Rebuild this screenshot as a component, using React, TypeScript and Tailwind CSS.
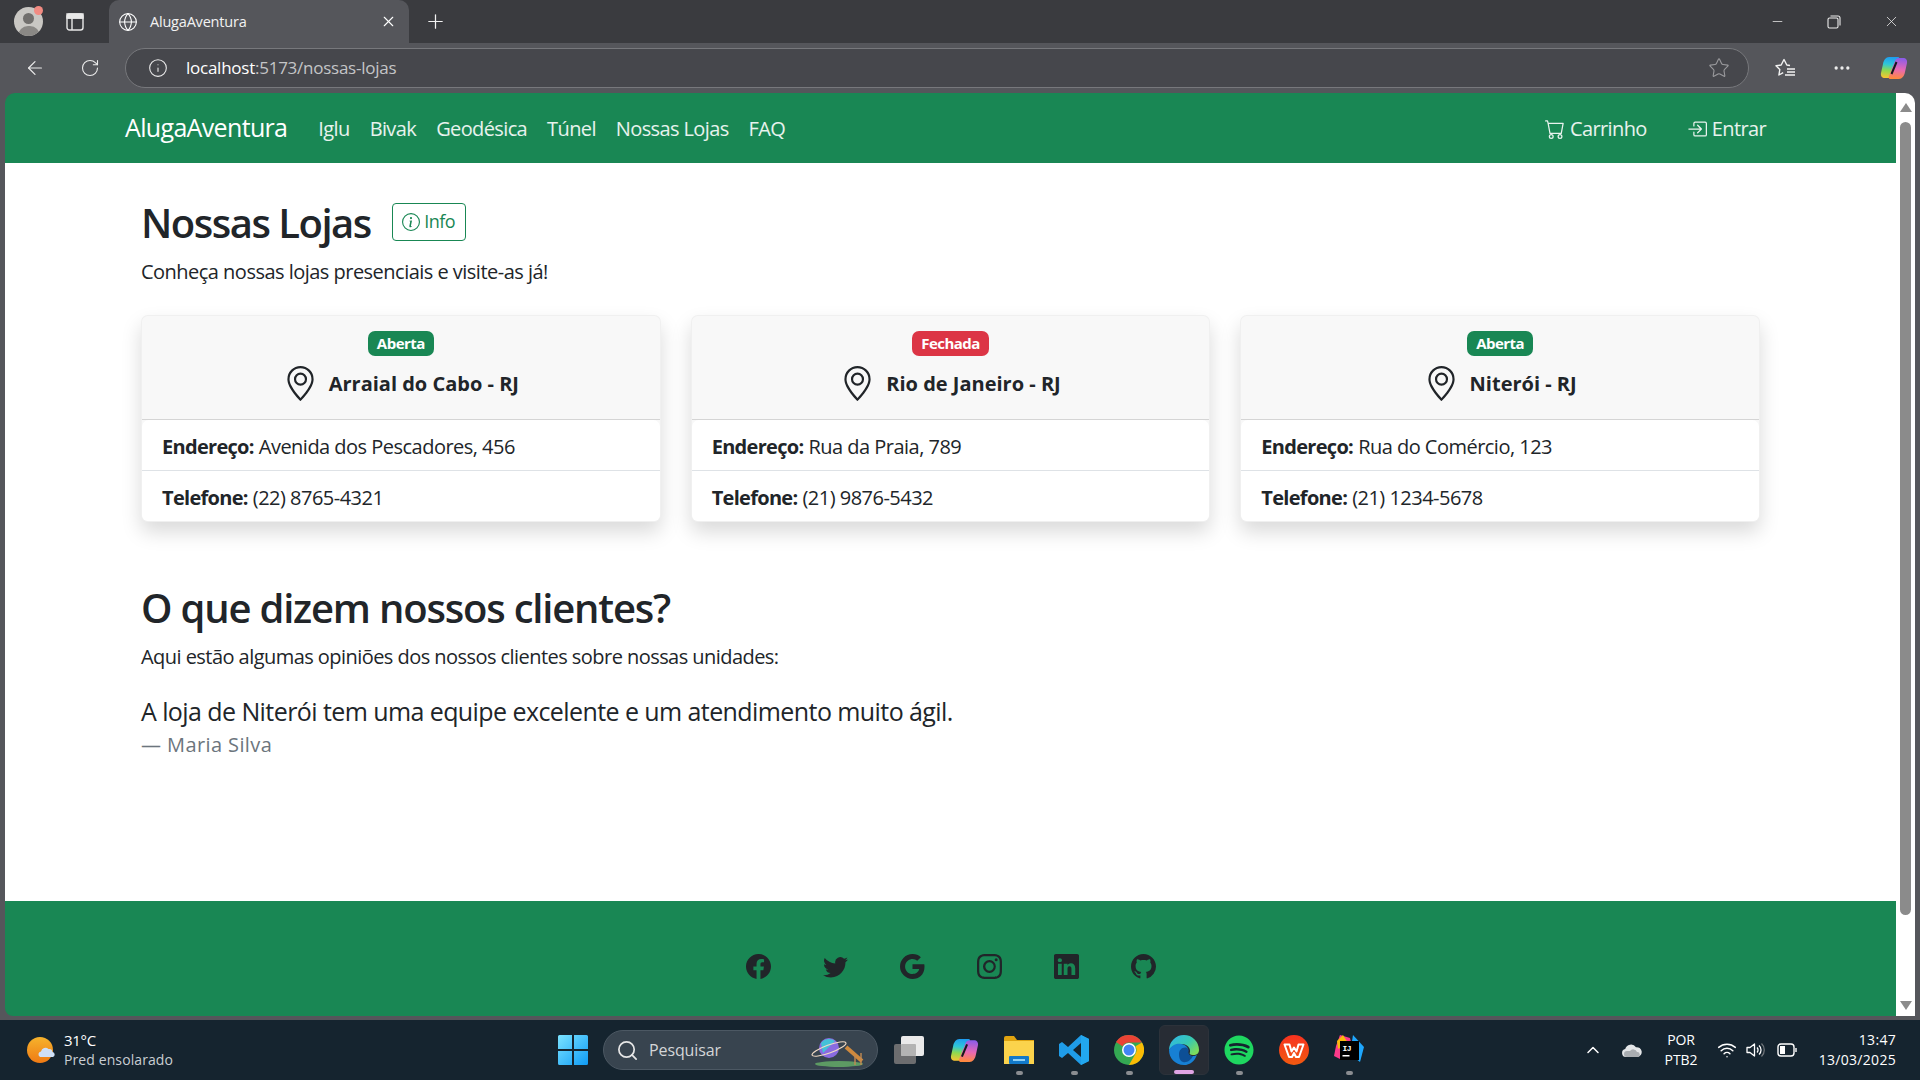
import React from 'react';
import { ArrowLeft, RotateCw, Info, Star, X, Plus, Globe, Minus, Search, ChevronUp, Wifi, MoreHorizontal } from 'lucide-react';
import {
  BsBoxArrowInRight,
  BsCart,
  BsFacebook,
  BsGeoAlt,
  BsGithub,
  BsGoogle,
  BsInfoCircle,
  BsInstagram,
  BsLinkedin,
  BsTwitter,
} from 'react-icons/bs';
import { FaSpotify } from 'react-icons/fa';

const stores = [
  { city: 'Arraial do Cabo - RJ', open: true, address: 'Avenida dos Pescadores, 456', phone: '(22) 8765-4321' },
  { city: 'Rio de Janeiro - RJ', open: false, address: 'Rua da Praia, 789', phone: '(21) 9876-5432' },
  { city: 'Niterói - RJ', open: true, address: 'Rua do Comércio, 123', phone: '(21) 1234-5678' },
];

const navLinks = ['Iglu', 'Bivak', 'Geodésica', 'Túnel', 'Nossas Lojas', 'FAQ'];

const CopilotLogo = ({ size }: { size: number }) => (
  <svg width={size} height={size} viewBox="0 0 28 28">
    <defs>
      <linearGradient id={`cpa${size}`} x1="0.5" y1="0" x2="0.4" y2="1">
        <stop offset="0" stopColor="#1f9df0" />
        <stop offset="0.35" stopColor="#2fc6d8" />
        <stop offset="0.65" stopColor="#8fd94f" />
        <stop offset="1" stopColor="#f7c531" />
      </linearGradient>
      <linearGradient id={`cpb${size}`} x1="0.6" y1="0" x2="0.5" y2="1">
        <stop offset="0" stopColor="#8a5ce8" />
        <stop offset="0.55" stopColor="#e868b4" />
        <stop offset="1" stopColor="#ff8a3c" />
      </linearGradient>
    </defs>
    <path d="M9 3h9c1.500 0 1.500 1.500 1 3l-6 15c-.7 1.800-2 3-4 3H5c-3 0-4.500-2-4-5l2-9c.7-4 3-7 6-7z" fill={`url(#cpa${size})`} />
    <path d="M19 25h-9c-1.500 0-1.500-1.500-1-3l6-15c.7-1.800 2-3 4-3h4c3 0 4.500 2 4 5l-2 9c-.7 4-3 7-6 7z" fill={`url(#cpb${size})`} />
    <path d="M16.500 8 11.500 20" stroke="#14161c" strokeWidth="2" />
  </svg>
);

const ChromeBar = () => (
  <>
    <div className="flex h-[43px] shrink-0 items-center bg-[#3a3b3f]">
      <div className="relative ml-[14px] flex h-[29px] w-[29px] items-end justify-center overflow-hidden rounded-full bg-[#c9c7c3]">
        <div className="absolute top-[6px] h-[11px] w-[11px] rounded-full bg-[#716f6d]" />
        <div className="h-[10px] w-[22px] rounded-t-full bg-[#8a8885]" />
      </div>
      <div className="relative -ml-[9px] -mt-[22px] h-[9px] w-[9px] rounded-full bg-[#f28b82]" />
      <svg className="ml-[23px]" width="18" height="18" viewBox="0 0 18 18" fill="none" stroke="#e8e8e8" strokeWidth="1.4">
        <rect x="1" y="1" width="16" height="16" rx="2.5" />
        <path d="M1 5h16M6 5v12" />
        <path d="M1 1h16v4H1z" fill="#e8e8e8" />
      </svg>
      <div className="ml-[25px] flex h-full w-[300px] items-center self-end rounded-t-[10px] bg-[#55565b] pl-[9px] text-white">
        <Globe size={20} strokeWidth={1.3} />
        <span className="ml-[12px] text-[14.500px] tracking-[-0.2px] text-[#f2f2f2]">AlugaAventura</span>
        <X className="ml-auto mr-[12px]" size={17} strokeWidth={1.6} />
      </div>
      <Plus className="ml-[15px] text-[#f2f2f2]" size={23} strokeWidth={1.3} />
      <div className="ml-auto flex items-center text-[#ededed]">
        <Minus size={15} strokeWidth={1.2} />
        <svg className="ml-[42px]" width="14" height="14" viewBox="0 0 14 14" fill="none" stroke="#ededed" strokeWidth="1.1">
          <rect x="1" y="3" width="10" height="10" rx="1.5" />
          <path d="M3.500 1h7.500A2 2 0 0 1 13 3v7.500" />
        </svg>
        <X className="ml-[42px] mr-[20px]" size={17} strokeWidth={1.1} />
      </div>
    </div>
    <div className="flex h-[50px] shrink-0 items-center bg-[#55565b] text-[#ececec]">
      <ArrowLeft className="ml-[24px]" size={22} strokeWidth={1.3} />
      <RotateCw className="ml-[34px]" size={20} strokeWidth={1.3} />
      <div className="ml-[25px] flex h-[40px] w-[1624px] items-center rounded-full border border-[#77787c] bg-[#46474c]">
        <Info className="ml-[22px]" size={20} strokeWidth={1.3} />
        <span className="ml-[18px] text-[17px] tracking-[-0.250px] text-[#c4c5c7]">
          <span className="text-white">localhost</span>:5173/nossas-lojas
        </span>
        <Star className="ml-auto mr-[18px] text-[#9a9a9d]" size={22} strokeWidth={1.2} />
      </div>
      <svg className="ml-[26px]" width="21" height="20" viewBox="0 0 21 20" fill="none" stroke="#f2f2f2" strokeWidth="1.400" strokeLinejoin="round">
        <path d="M15 7.500 11.800 7 9 1.500 6.200 7 1 7.800l3.800 3.800-.9 5.400 4.300-2.300" />
        <path d="M12 11h8M12 14h8M10 17h10" />
      </svg>
      <MoreHorizontal className="ml-[36px]" size={20} strokeWidth={2} />
      <div className="ml-[28px]">
        <CopilotLogo size={28} />
      </div>
    </div>
  </>
);

const Navbar = () => (
  <nav className="flex h-[70px] shrink-0 items-center bg-[#198754] pb-[1px] pl-[120px] pr-[130px] text-[20px] tracking-[-0.62px] text-white/90">
    <span className="text-[25px] tracking-[-0.66px] text-white">AlugaAventura</span>
    <div className="ml-[31px] mt-[2px] flex items-center gap-[20px]">
      {navLinks.map((link) => (
        <span key={link}>{link}</span>
      ))}
    </div>
    <div className="ml-auto mt-[2px] flex items-center gap-[40px]">
      <span className="flex items-center gap-[5px]">
        <BsCart size={20} /> Carrinho
      </span>
      <span className="flex items-center gap-[5px]">
        <BsBoxArrowInRight size={20} /> Entrar
      </span>
    </div>
  </nav>
);

const StoreCard = ({ city, open, address, phone }: (typeof stores)[number]) => (
  <div className="overflow-hidden rounded-[7px] border border-black/[0.03] bg-[#f8f8f8] shadow-[0_10px_20px_rgba(0,0,0,0.15)]">
    <div className="flex h-[104px] flex-col items-center border-b border-[#d5d5d5] pt-[15px]">
      <span className={`flex h-[25px] items-center rounded-[7px] px-[9px] text-[15px] font-bold text-white ${open ? 'bg-[#198754]' : 'bg-[#dc3545]'}`}>
        {open ? 'Aberta' : 'Fechada'}
      </span>
      <div className="mt-[10px] flex items-center gap-[11px] text-[20px] font-bold tracking-normal">
        <BsGeoAlt size={35} />
        {city}
      </div>
    </div>
    <div className="rounded-t-[7px] bg-white">
      <div className="flex h-[51px] items-center border-b border-[#dee2e6] px-[20px] pt-[3px]">
        <b className="mr-[5px] font-bold tracking-[-0.7px]">Endereço:</b> {address}
      </div>
      <div className="flex h-[50px] items-center px-[20px] pt-[3px]">
        <b className="mr-[5px] font-bold tracking-[-0.7px]">Telefone:</b> {phone}
      </div>
    </div>
  </div>
);

const Main = () => (
  <main className="flex-1 bg-white px-[136px] pt-[36px] text-[20px]">
    <div className="flex items-center gap-[21px]">
      <h1 className="text-[40px] font-semibold leading-[48px] tracking-[-1.5px]">Nossas Lojas</h1>
      <button className="-mt-[3px] flex h-[38px] w-[74px] items-center justify-center gap-[4px] rounded-[4px] border border-[#198754] text-[18px] text-[#198754]">
        <BsInfoCircle size={18} /> Info
      </button>
    </div>
    <p className="mt-[10px] leading-[30px]">Conheça nossas lojas presenciais e visite-as já!</p>
    <div className="mt-[28px] grid grid-cols-3 gap-[30px]">
      {stores.map((store) => (
        <StoreCard key={store.city} {...store} />
      ))}
    </div>
    <h2 className="mt-[62px] text-[40px] font-semibold leading-[48px] tracking-[-1.2px]">O que dizem nossos clientes?</h2>
    <p className="mt-[10px] leading-[30px] tracking-[-0.55px]">Aqui estão algumas opiniões dos nossos clientes sobre nossas unidades:</p>
    <blockquote className="mt-[20px] text-[25px] leading-[38px] tracking-[-0.58px]">A loja de Niterói tem uma equipe excelente e um atendimento muito ágil.</blockquote>
    <p className="leading-[30px] tracking-[0.4px] text-[#6c757d]">— Maria Silva</p>
  </main>
);

const Footer = () => (
  <footer className="flex h-[115px] shrink-0 items-start justify-center gap-[52px] rounded-bl-[8px] bg-[#198754] pt-[53px] text-[#212529]">
    <BsFacebook size={25} />
    <BsTwitter size={25} />
    <BsGoogle size={25} />
    <BsInstagram size={25} />
    <BsLinkedin size={25} />
    <BsGithub size={25} />
  </footer>
);

const Scrollbar = () => (
  <div className="flex w-[19px] shrink-0 flex-col items-center rounded-tr-[10px] bg-white">
    <div className="mt-[10px] h-0 w-0 border-x-[6px] border-b-[9px] border-x-transparent border-b-[#8b8b8b]" />
    <div className="mt-[10px] h-[793px] w-[11px] rounded-full bg-[#8b8b8b]" />
    <div className="mt-auto mb-[6px] h-0 w-0 border-x-[6px] border-t-[9px] border-x-transparent border-t-[#8b8b8b]" />
  </div>
);

const TaskIcon = ({ children, dot, active }: { children: React.ReactNode; dot?: boolean; active?: boolean }) => (
  <div className={`relative flex h-[50px] w-[50px] items-center justify-center rounded-[6px] ${active ? 'border border-[#2c323a] bg-[#272c34]' : ''}`}>
    {children}
    {dot && <div className={`absolute bottom-[0px] h-[4px] rounded-full ${active ? 'w-[20px] bg-[#e0a4e4]' : 'w-[7px] bg-[#8a8d91]'}`} />}
  </div>
);

const Taskbar = () => (
  <div className="flex h-[60px] shrink-0 items-center bg-[#15242f] text-white">
    <svg className="ml-[27px]" width="29" height="26" viewBox="0 0 29 26">
      <defs>
        <linearGradient id="sun" x1="0" y1="0" x2="0" y2="1">
          <stop offset="0" stopColor="#f6b32c" />
          <stop offset="1" stopColor="#ef7a14" />
        </linearGradient>
      </defs>
      <circle cx="13" cy="13" r="13" fill="url(#sun)" />
      <path d="M13 20a3 3 0 0 1 1-5.600 4.500 4.500 0 0 1 7.500-2.400 3.500 3.500 0 0 1 4 3 2.600 2.600 0 0 1 .5 5z" fill="#cfe0f7" />
    </svg>
    <div className="ml-[8px] w-[110px] text-[14px] leading-[20px] tracking-[0.1px]">
      <div className="text-[15px] tracking-[-0.3px]">31°C</div>
      <div className="whitespace-nowrap text-[#c9ced3]">Pred ensolarado</div>
    </div>
    <svg className="ml-[384px]" width="30" height="30" viewBox="0 0 30 30">
      <defs>
        <linearGradient id="win" x1="0" y1="0" x2="1" y2="1">
          <stop offset="0" stopColor="#7be3ff" />
          <stop offset="1" stopColor="#0f9bf5" />
        </linearGradient>
      </defs>
      <path d="M0 1.500A1.500 1.500 0 0 1 1.500 0H14v14H0zM16 0h12.500A1.500 1.500 0 0 1 30 1.500V14H16zM0 16h14v14H1.500A1.500 1.500 0 0 1 0 28.500zM16 16h14v12.500a1.500 1.500 0 0 1-1.500 1.500H16z" fill="url(#win)" />
    </svg>
    <div className="relative ml-[15px] flex h-[40px] w-[275px] items-center rounded-full border border-[#4c5863] bg-[#38444f]">
      <Search className="ml-[12px] text-[#e6e6e6]" size={23} strokeWidth={1.8} />
      <span className="ml-[10px] text-[16px] tracking-[-0.1px] text-[#d4d6d8]">Pesquisar</span>
      <svg className="absolute right-[10px] top-[4px]" width="56" height="32" viewBox="0 0 56 32">
        <ellipse cx="28" cy="29" rx="24" ry="3" fill="#5d9a63" />
        <circle cx="18" cy="13" r="10" fill="#8a6be0" />
        <path d="M10 8a10 10 0 0 1 14-2L12 18z" fill="#45c1d8" />
        <ellipse cx="18" cy="14" rx="18" ry="4" fill="none" stroke="#f0d9c4" strokeWidth="1.2" transform="rotate(-20 18 14)" />
        <path d="M35 12l16 14" stroke="#d08a3e" strokeWidth="4" />
        <path d="M44 20v10M50 18v12" stroke="#c28a52" strokeWidth="1.4" />
      </svg>
    </div>
    <div className="ml-[6px] flex items-center gap-[5px]">
      <TaskIcon>
        <svg width="30" height="28" viewBox="0 0 30 28">
          <rect x="0" y="8" width="22" height="20" rx="2" fill="#6c6d6f" />
          <rect x="7" y="0" width="23" height="20" rx="2" fill="#eaeaea" />
          <rect x="7" y="8" width="15" height="12" rx="1" fill="#b3b3b3" />
        </svg>
      </TaskIcon>
      <TaskIcon>
        <CopilotLogo size={29} />
      </TaskIcon>
      <TaskIcon dot>
        <svg width="30" height="28" viewBox="0 0 30 28">
          <path d="M0 2a2 2 0 0 1 2-2h8l3 4h17v24H0z" fill="#e0a410" />
          <rect x="0" y="5" width="30" height="23" fill="#fbd34c" />
          <rect x="5" y="20" width="20" height="8" rx="1" fill="#1279c9" />
          <rect x="9" y="23" width="12" height="2" fill="#8fd0f5" />
        </svg>
      </TaskIcon>
      <TaskIcon dot>
        <svg width="30" height="30" viewBox="0 0 30 30">
          <path d="M22 0l8 4v22l-8 4L9 18l-6 5-3-2v-12l3-2 6 5zM22 8l-8 7 8 7z" fill="#1f9ce8" />
          <path d="M22 0l8 4v22l-8 4z" fill="#22a8f0" />
        </svg>
      </TaskIcon>
      <TaskIcon dot>
        <svg width="30" height="30" viewBox="0 0 30 30">
          <circle cx="15" cy="15" r="15" fill="#34a853" />
          <path d="M15 0a15 15 0 0 1 13 7.500H15a7.500 7.500 0 0 0-6.500 3.750L2 7A15 15 0 0 1 15 0z" fill="#ea4335" />
          <path d="M28 7.500A15 15 0 0 1 15 30l6.500-11.250A7.500 7.500 0 0 0 21.500 11.250z" fill="#fbbc05" />
          <circle cx="15" cy="15" r="7" fill="#fff" />
          <circle cx="15" cy="15" r="5.500" fill="#4285f4" />
        </svg>
      </TaskIcon>
      <TaskIcon dot active>
        <svg width="30" height="30" viewBox="0 0 30 30">
          <defs>
            <linearGradient id="edge" x1="0" y1="0" x2="1" y2="0.700">
              <stop offset="0" stopColor="#2fb4ef" />
              <stop offset="0.6" stopColor="#38c9b0" />
              <stop offset="1" stopColor="#7ddc5c" />
            </linearGradient>
          </defs>
          <path d="M0 15a15 15 0 0 1 30 0c0 3-2 5-6 5-3 0-4-1-3-3 .8-4-3-8-8-8-6 0-11 3-13 6z" fill="url(#edge)" />
          <path d="M0 15c2-4 7-7 12-6 5 .6 8 4 7 8-.6 2.500 2 4 5 4 1.500 0 3-.6 4-1.600C26 26 21 30 15 30 6 30 0 23 0 15z" fill="#1780d4" />
          <path d="M10 19c0-4 3-7 7-6.500 2 .4 3 2 2.500 4-.6 2.500 1.500 4.500 4.500 4.500-2 4-6 7-10 6-3-1-4-4-4-8z" fill="#0d4f96" />
        </svg>
      </TaskIcon>
      <TaskIcon dot>
        <FaSpotify size={30} color="#1ed760" />
      </TaskIcon>
      <TaskIcon>
        <svg width="30" height="30" viewBox="0 0 30 30">
          <defs>
            <linearGradient id="wps" x1="0" y1="0" x2="0" y2="1">
              <stop offset="0" stopColor="#f7321f" />
              <stop offset="1" stopColor="#f25a10" />
            </linearGradient>
          </defs>
          <circle cx="15" cy="15" r="15" fill="url(#wps)" />
          <path d="M5.500 9.500h5l2 7 2.500-4 2.500 4 2-7h5L20 22h-3l-2-4-2 4h-3z" fill="none" stroke="#fff" strokeWidth="2" strokeLinejoin="round" />
        </svg>
      </TaskIcon>
      <TaskIcon dot>
        <svg width="30" height="30" viewBox="0 0 30 30">
          <path d="M6 0l10 3 2 8-10 14-8-4 2-10z" fill="#fc3a8a" />
          <path d="M19 0l11 12-4 15-10-8z" fill="#1ea7fd" />
          <path d="M3 6l6-6 5 8-10 6z" fill="#f9b90c" />
          <rect x="6" y="6" width="19" height="19" fill="#000" />
          <text x="8.500" y="15.500" fontSize="8" fontWeight="700" fill="#fff" fontFamily="Liberation Mono, monospace">IJ</text>
          <rect x="8.500" y="20" width="7" height="1.500" fill="#fff" />
        </svg>
      </TaskIcon>
    </div>
    <div className="ml-auto flex items-center text-[14px] leading-[20px] tracking-normal">
      <ChevronUp size={20} strokeWidth={1.8} />
      <svg className="ml-[19px]" width="20" height="14" viewBox="0 0 20 14">
        <path d="M4 14a4 4 0 0 1-.8-7.900A6 6 0 0 1 14 4.200 4.500 4.500 0 0 1 15.500 14z" fill="#e4e6e8" />
        <path d="M5 14a3 3 0 0 1 0-6h3a4 4 0 0 1 7 1 2.500 2.500 0 0 1 .5 5z" fill="#a9adb1" />
      </svg>
      <div className="ml-[17px] w-[44px] text-center tracking-[-0.1px]">
        <div>POR</div>
        <div>PTB2</div>
      </div>
      <Wifi className="ml-[14px]" size={20} strokeWidth={1.8} />
      <svg className="ml-[9px]" width="20" height="18" viewBox="0 0 20 18" fill="none" stroke="#fff" strokeWidth="1.300" strokeLinejoin="round">
        <path d="M1 6.500h3L8.500 3v12L4 11.500H1z" />
        <path d="M11 6.500a3.500 3.500 0 0 1 0 5M13 4.500a6 6 0 0 1 0 9" />
        <path d="M15.500 2.500a9 9 0 0 1 0 13" stroke="#6f7479" />
      </svg>
      <svg className="ml-[11px]" width="20" height="14" viewBox="0 0 20 14" fill="none" stroke="#fff" strokeWidth="1.4">
        <rect x="1" y="1" width="16" height="12" rx="3" />
        <rect x="3" y="3" width="5" height="8" fill="#fff" stroke="none" />
        <path d="M19 5v4" />
      </svg>
      <div className="ml-[19px] mr-[24px] w-[80px] whitespace-nowrap text-right tracking-[0.3px]">
        <div>13:47</div>
        <div>13/03/2025</div>
      </div>
    </div>
  </div>
);

export default function App() {
  return (
    <div className="flex h-screen w-full flex-col overflow-hidden bg-[#55565b] font-['Open_Sans',sans-serif] text-[20px] tracking-[-0.026em] text-[#212529]">
      <ChromeBar />
      <div className="flex h-[923px] shrink-0 pl-[5px] pr-[5px]">
        <div className="flex min-w-0 flex-1 flex-col overflow-hidden rounded-tl-[10px]">
          <Navbar />
          <Main />
          <Footer />
        </div>
        <Scrollbar />
      </div>
      <div className="h-[4px] shrink-0" />
      <Taskbar />
    </div>
  );
}
